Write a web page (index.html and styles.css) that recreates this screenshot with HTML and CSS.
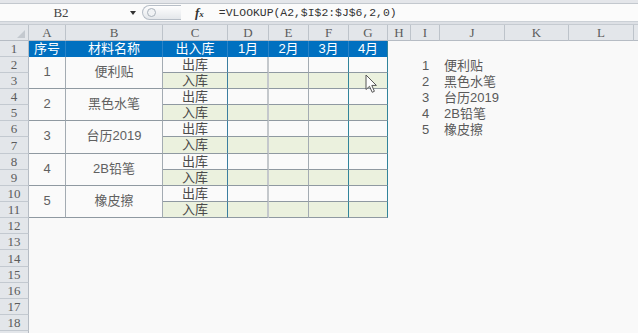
FILE: index.html
```html
<!DOCTYPE html>
<html lang="zh-CN">
<head>
    <meta charset="UTF-8">
    <title>材料出入库</title>
    <link rel="stylesheet" href="styles.css">
</head>
<body>
    <div class="ribbon-edge"></div>
    <div class="formula-bar">
        <div class="name-box"><span class="name">B2</span><span class="drop"></span></div>
        <div class="splitter"><span class="knob"></span></div>
        <div class="fx">f<span>x</span></div>
        <div class="formula">=VLOOKUP(A2,$I$2:$J$6,2,0)</div>
    </div>
    <div class="band"></div>

    <div class="col-heads">
        <div class="ch w-rh"><span class="corner"></span></div>
        <div class="ch w-a">A</div>
        <div class="ch w-b">B</div>
        <div class="ch w-c">C</div>
        <div class="ch w-d">D</div>
        <div class="ch w-e">E</div>
        <div class="ch w-f">F</div>
        <div class="ch w-g">G</div>
        <div class="ch w-h">H</div>
        <div class="ch w-i">I</div>
        <div class="ch w-j">J</div>
        <div class="ch w-k">K</div>
        <div class="ch w-l">L</div>
        <div class="ch w-m"></div>
    </div>

    <div class="sheet">
        <div class="row-heads">
            <div class="rh">1</div>
            <div class="rh">2</div>
            <div class="rh">3</div>
            <div class="rh">4</div>
            <div class="rh">5</div>
            <div class="rh">6</div>
            <div class="rh tall">7</div>
            <div class="rh">8</div>
            <div class="rh">9</div>
            <div class="rh">10</div>
            <div class="rh">11</div>
            <div class="rh">12</div>
            <div class="rh">13</div>
            <div class="rh tall">14</div>
            <div class="rh">15</div>
            <div class="rh">16</div>
            <div class="rh">17</div>
            <div class="rh">18</div>
            <div class="rh"></div>
        </div>

        <div class="cells">
            <div class="table">
                <div class="th">序号</div>
                <div class="th">材料名称</div>
                <div class="th">出入库</div>
                <div class="th">1月</div>
                <div class="th">2月</div>
                <div class="th">3月</div>
                <div class="th last">4月</div>

                <div class="c m">1</div>
                <div class="c m">便利贴</div>
                <div class="c out kind">出库</div>
                <div class="c out d"></div><div class="c out"></div><div class="c out f"></div><div class="c out g"></div>
                <div class="c in kind">入库</div>
                <div class="c in d"></div><div class="c in"></div><div class="c in f"></div><div class="c in g"></div>

                <div class="c m">2</div>
                <div class="c m">黑色水笔</div>
                <div class="c out kind">出库</div>
                <div class="c out d"></div><div class="c out"></div><div class="c out f"></div><div class="c out g"></div>
                <div class="c in kind">入库</div>
                <div class="c in d"></div><div class="c in"></div><div class="c in f"></div><div class="c in g"></div>

                <div class="c m">3</div>
                <div class="c m">台历2019</div>
                <div class="c out kind">出库</div>
                <div class="c out d"></div><div class="c out"></div><div class="c out f"></div><div class="c out g"></div>
                <div class="c in kind">入库</div>
                <div class="c in d"></div><div class="c in"></div><div class="c in f"></div><div class="c in g"></div>

                <div class="c m">4</div>
                <div class="c m">2B铅笔</div>
                <div class="c out kind">出库</div>
                <div class="c out d"></div><div class="c out"></div><div class="c out f"></div><div class="c out g"></div>
                <div class="c in kind">入库</div>
                <div class="c in d"></div><div class="c in"></div><div class="c in f"></div><div class="c in g"></div>

                <div class="c m">5</div>
                <div class="c m">橡皮擦</div>
                <div class="c out kind">出库</div>
                <div class="c out d"></div><div class="c out"></div><div class="c out f"></div><div class="c out g"></div>
                <div class="c in kind">入库</div>
                <div class="c in d"></div><div class="c in"></div><div class="c in f"></div><div class="c in g"></div>
            </div>

            <div class="list">
                <div class="item"><span class="num">1</span><span class="label">便利贴</span></div>
                <div class="item"><span class="num">2</span><span class="label">黑色水笔</span></div>
                <div class="item"><span class="num">3</span><span class="label">台历2019</span></div>
                <div class="item"><span class="num">4</span><span class="label">2B铅笔</span></div>
                <div class="item"><span class="num">5</span><span class="label">橡皮擦</span></div>
            </div>
        </div>
    </div>

    <svg class="cursor" width="13" height="20" viewBox="0 0 13 20">
        <path d="M1 1 L1 15.5 L4.5 12.3 L7.2 18.3 L9.4 17.3 L6.8 11.4 L11.4 11.4 Z" fill="#fdfdfd" stroke="#555" stroke-width="1" stroke-linejoin="round"/>
    </svg>
</body>
</html>
```

FILE: styles.css
```css
body {
    margin: 0;
    width: 638px;
    height: 333px;
    overflow: hidden;
    position: relative;
    background-color: #f9f9f9;
    font-family: "Liberation Sans", "Noto Sans CJK SC", sans-serif;
    font-size: 13px;
    color: #555;
}
.ribbon-edge {
    height: 3px;
    background-color: #e4e6ea;
    border-bottom: 1px solid #c3c8ce;
}
.formula-bar {
    display: flex;
    align-items: center;
    height: 17px;
    background-color: #fbfbfb;
    border-bottom: 1px solid #cbd0d6;
}
.name-box {
    display: flex;
    align-items: center;
    width: 142px;
}
.name {
    width: 122px;
    text-align: center;
    font-family: "Liberation Serif", serif;
    color: #444;
}
.drop {
    margin-left: 8px;
    border-top: 4px solid #333;
    border-left: 3px solid transparent;
    border-right: 3px solid transparent;
}
.splitter {
    display: flex;
    align-items: center;
    width: 38px;
    height: 13px;
    border: 1px solid #b7bec7;
    border-right: none;
    border-radius: 8px 0 0 8px;
    background: linear-gradient(#fefefe, #e4e7eb);
}
.knob {
    width: 7px;
    height: 7px;
    margin-left: 4px;
    border: 1px solid #aab2bb;
    border-radius: 50%;
    background-color: #f0f2f4;
}
.fx {
    margin-left: 14px;
    font-family: "Liberation Serif", serif;
    font-style: italic;
    font-weight: bold;
    font-size: 13px;
    color: #333;
}
.fx span {
    font-size: 9px;
}
.formula {
    margin-left: 15px;
    font-family: "Liberation Mono", monospace;
    font-size: 11.4px;
    color: #333;
}
.band {
    height: 2px;
    background-color: #dde0e5;
}
.col-heads {
    display: flex;
    height: 16px;
    border-top: 1px solid #c6cbd1;
    background-color: #e3e6ea;
}
.ch {
    position: relative;
    flex: none;
    box-sizing: border-box;
    height: 16px;
    border-right: 1px solid #bdc3ca;
    border-bottom: 1px solid #b6bcc4;
    text-align: center;
    line-height: 16px;
    font-family: "Liberation Serif", serif;
    color: #5c5c5c;
}
.corner {
    position: absolute;
    right: 3px;
    bottom: 2px;
    border-left: 8px solid transparent;
    border-bottom: 8px solid #c4c9cf;
}
.w-rh { width: 29px; }
.w-a { width: 37px; }
.w-b { width: 97px; }
.w-c { width: 65px; }
.w-d { width: 41px; }
.w-e { width: 40px; }
.w-f { width: 40px; }
.w-g { width: 39px; }
.w-h { width: 23px; }
.w-i { width: 29px; }
.w-j { width: 65px; }
.w-k { width: 64px; }
.w-l { width: 65px; }
.w-m { flex: 1; border-right: none; }
.sheet {
    display: flex;
}
.row-heads {
    flex: none;
    width: 29px;
    background-color: #e3e6ea;
}
.rh {
    box-sizing: border-box;
    height: 16px;
    border-right: 1px solid #b6bcc4;
    border-bottom: 1px solid #c3c9d0;
    text-align: center;
    line-height: 16px;
    font-family: "Liberation Serif", serif;
    color: #5c5c5c;
}
.rh.tall {
    height: 17px;
    line-height: 17px;
}
.cells {
    display: flex;
    align-items: flex-start;
}
.table {
    display: grid;
    grid-template-columns: 37px 97px 65px 41px 40px 40px 39px;
    grid-template-rows: repeat(6, 16px) 17px repeat(4, 16px);
}
.th {
    box-sizing: border-box;
    background-color: #0070c0;
    border-right: 1px solid #2a83c8;
    text-align: center;
    line-height: 16px;
    color: #fff;
}
.th.last {
    border-right-color: #31849b;
}
.c {
    box-sizing: border-box;
    border-right: 1px solid #a3abb2;
    border-bottom: 1px solid #8f99a1;
    text-align: center;
    line-height: 16px;
}
.m {
    grid-row: span 2;
    line-height: 30px;
    background-color: #fafafa;
    color: #606060;
}
.kind {
    border-right-color: #3b7ea0;
    color: #4a4a4a;
}
.out {
    background-color: #fafafa;
}
.in {
    background-color: #ebf1de;
}
.d {
    border-right: 2px solid #c4c8cc;
}
.f,
.g {
    border-right-color: #31849b;
}
.list {
    margin-left: 23px;
    margin-top: 16px;
}
.item {
    display: flex;
    height: 16px;
    line-height: 17px;
    color: #5a5a5a;
}
.num {
    width: 29px;
    text-align: center;
}
.label {
    padding-left: 4px;
}
.cursor {
    position: absolute;
    left: 365px;
    top: 74px;
}
```
